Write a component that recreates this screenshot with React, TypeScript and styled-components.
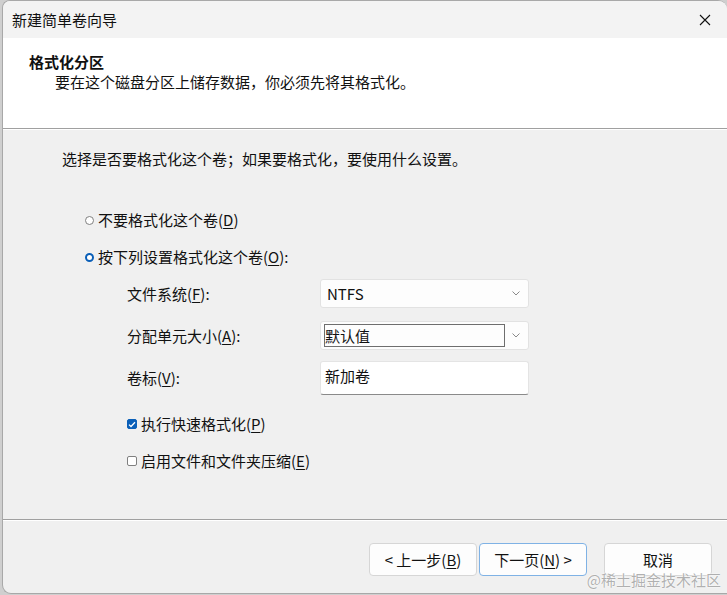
import React from "react";
import styled, { createGlobalStyle } from "styled-components";

const GlobalStyle = createGlobalStyle`
  html, body { margin: 0; padding: 0; background: #cfcfcf; }
  body { font-family: "Noto Sans CJK SC", "Noto Sans", sans-serif; font-size: 15px; color: #111; }
  #root { width: 727px; height: 595px; }
  * { box-sizing: border-box; }
`;

const Page = styled.div`
  width: 727px;
  height: 595px;
  padding: 0 0 1px 2px;
  display: flex;
`;

const Window = styled.div`
  position: relative;
  flex: 1;
  display: flex;
  flex-direction: column;
  background: #f0f0f0;
  border: 1px solid #a8a8a8;
  border-right: none;
  border-radius: 8px 9px 0 9px;
  overflow: hidden;
`;

const TitleBar = styled.div`
  height: 37px;
  flex: none;
  display: flex;
  align-items: center;
  justify-content: space-between;
  padding: 0 16px 0 9px;
  background: #f3f3f3;
  line-height: 20px;
`;

const TitleText = styled.span`
  font-size: 15px;
  color: #111;
`;

const CloseIcon = styled.svg`
  width: 12px;
  height: 12px;
  display: block;
`;

const Header = styled.div`
  height: 90px;
  flex: none;
  background: #ffffff;
  padding: 14px 0 0 26px;
  line-height: 20px;
`;

const HeaderTitle = styled.div`
  font-weight: 700;
  font-size: 15px;
`;

const HeaderSub = styled.div`
  padding-left: 26px;
`;

const Divider = styled.div`
  height: 2px;
  flex: none;
  border-top: 1px solid #a0a0a0;
  border-bottom: 1px solid #ffffff;
`;

const Body = styled.div`
  flex: 1;
  display: flex;
  flex-direction: column;
  padding: 19px 0 0 59px;
  line-height: 20px;
`;

const Intro = styled.div`
  margin-bottom: 41px;
`;

const OptionRow = styled.div<{ $indent?: number; $top?: number }>`
  display: flex;
  align-items: center;
  height: 20px;
  margin-left: ${(p) => p.$indent ?? 0}px;
  margin-top: ${(p) => p.$top ?? 0}px;
`;

const Radio = styled.span<{ $checked?: boolean }>`
  width: 9px;
  height: 9px;
  border-radius: 50%;
  margin-right: 4px;
  flex: none;
  background: #fff;
  border: ${(p) => (p.$checked ? "2.5px solid #0a5fb8" : "1px solid #808080")};
`;

const Check = styled.span<{ $checked?: boolean }>`
  width: 10px;
  height: 10px;
  border-radius: 2px;
  margin-right: 4px;
  flex: none;
  display: flex;
  align-items: center;
  justify-content: center;
  background: ${(p) => (p.$checked ? "#0a5fb8" : "#fff")};
  border: 1px solid ${(p) => (p.$checked ? "#0a5fb8" : "#808080")};
`;

const Key = styled.u`
  text-decoration-thickness: 1px;
  text-underline-offset: 2px;
`;

const Form = styled.div`
  display: grid;
  grid-template-columns: 193px 209px;
  margin-left: 65px;
  margin-top: 12px;
  align-items: center;
`;

const Label = styled.div<{ $top?: number }>`
  margin-top: ${(p) => p.$top ?? 0}px;
`;

const Combo = styled.div<{ $top?: number }>`
  margin-top: ${(p) => p.$top ?? 0}px;
  height: 29px;
  background: #fdfdfd;
  border: 1px solid #e2e2e2;
  border-radius: 3px;
  display: flex;
  align-items: center;
  justify-content: space-between;
  padding: 0 8px 0 3px;
`;

const ComboValue = styled.span<{ $focus?: boolean }>`
  flex: ${(p) => (p.$focus ? "none" : "1")};
  width: ${(p) => (p.$focus ? "181px" : "auto")};
  height: 23px;
  line-height: 21px;
  padding-left: ${(p) => (p.$focus ? "0" : "2px")};
  border: 1px solid ${(p) => (p.$focus ? "#6e6e6e" : "transparent")};
`;

const Chevron = styled.svg`
  width: 8px;
  height: 5px;
  display: block;
`;

const TextBox = styled.div<{ $top?: number }>`
  margin-top: ${(p) => p.$top ?? 0}px;
  height: 34px;
  background: #ffffff;
  border: 1px solid #e4e4e4;
  border-bottom: 1px solid #8a8a8a;
  border-radius: 3px;
  padding: 4px 0 0 4px;
  line-height: 20px;
`;

const Footer = styled.div`
  height: 72px;
  flex: none;
  display: flex;
  justify-content: flex-end;
  align-items: flex-start;
  padding: 22px 15px 0 0;
`;

const Button = styled.button<{ $primary?: boolean; $gap?: number }>`
  width: 108px;
  height: 33px;
  margin-left: ${(p) => p.$gap ?? 0}px;
  font-family: inherit;
  font-size: 15px;
  color: #111;
  background: #fdfdfd;
  border: 1px solid ${(p) => (p.$primary ? "#7fb2e5" : "#d6d6d6")};
  border-radius: 4px;
  padding: 0;
  line-height: 20px;
`;

const Watermark = styled.div`
  position: absolute;
  right: 6px;
  bottom: 3px;
  font-size: 15px;
  line-height: 20px;
  color: rgba(150, 150, 150, 0.75);
  text-shadow: 0 0 2px #fff, 0 0 1px #fff;
  pointer-events: none;
`;

const ChevronIcon = () => (
  <Chevron viewBox="0 0 8 5">
    <path d="M0.5 0.5 L4 4 L7.5 0.5" fill="none" stroke="#8a8a8a" strokeWidth="1" />
  </Chevron>
);

export default function App() {
  return (
    <>
      <GlobalStyle />
      <Page>
        <Window>
          <TitleBar>
            <TitleText>新建简单卷向导</TitleText>
            <CloseIcon viewBox="0 0 12 12">
              <path d="M1 1 L11 11 M11 1 L1 11" stroke="#111" strokeWidth="1.1" />
            </CloseIcon>
          </TitleBar>
          <Header>
            <HeaderTitle>格式化分区</HeaderTitle>
            <HeaderSub>要在这个磁盘分区上储存数据，你必须先将其格式化。</HeaderSub>
          </Header>
          <Divider />
          <Body>
            <Intro>选择是否要格式化这个卷；如果要格式化，要使用什么设置。</Intro>
            <OptionRow $indent={23}>
              <Radio />
              <span>
                不要格式化这个卷(<Key>D</Key>)
              </span>
            </OptionRow>
            <OptionRow $indent={23} $top={17}>
              <Radio $checked />
              <span>
                按下列设置格式化这个卷(<Key>O</Key>):
              </span>
            </OptionRow>
            <Form>
              <Label>
                文件系统(<Key>F</Key>):
              </Label>
              <Combo>
                <ComboValue>NTFS</ComboValue>
                <ChevronIcon />
              </Combo>
              <Label $top={13}>
                分配单元大小(<Key>A</Key>):
              </Label>
              <Combo $top={13}>
                <ComboValue $focus>默认值</ComboValue>
                <ChevronIcon />
              </Combo>
              <Label $top={11}>
                卷标(<Key>V</Key>):
              </Label>
              <TextBox $top={11}>新加卷</TextBox>
            </Form>
            <OptionRow $indent={65} $top={19}>
              <Check $checked>
                <svg width="8" height="7" viewBox="0 0 8 7">
                  <path d="M1 3.6 L3 5.5 L7 1.2" fill="none" stroke="#fff" strokeWidth="1.3" />
                </svg>
              </Check>
              <span>
                执行快速格式化(<Key>P</Key>)
              </span>
            </OptionRow>
            <OptionRow $indent={65} $top={17}>
              <Check />
              <span>
                启用文件和文件夹压缩(<Key>E</Key>)
              </span>
            </OptionRow>
          </Body>
          <Divider />
          <Footer>
            <Button>
              &lt; 上一步(<Key>B</Key>)
            </Button>
            <Button $primary $gap={2}>
              下一页(<Key>N</Key>) &gt;
            </Button>
            <Button $gap={17}>取消</Button>
          </Footer>
          <Watermark>@稀土掘金技术社区</Watermark>
        </Window>
      </Page>
    </>
  );
}
